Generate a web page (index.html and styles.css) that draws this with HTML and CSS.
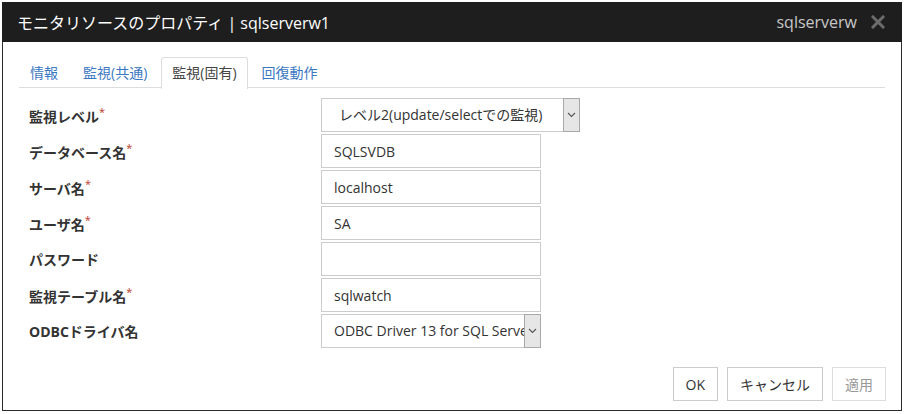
FILE: index.html
```html
<!DOCTYPE html>
<html lang="ja">
<head>
    <meta charset="UTF-8">
    <title>モニタリソースのプロパティ</title>
    <link rel="stylesheet" href="styles.css">
</head>
<body>
    <div class="dialog">
        <div class="titlebar">
            <span class="title">モニタリソースのプロパティ | sqlserverw1</span>
            <span class="title-right">sqlserverw</span>
            <svg class="close" width="14" height="14" viewBox="0 0 14 14">
                <path d="M2 2 L12 12 M12 2 L2 12" stroke="#6b6b6b" stroke-width="3" stroke-linecap="square"/>
            </svg>
        </div>

        <ul class="tabs">
            <li>情報</li>
            <li>監視(共通)</li>
            <li class="active">監視(固有)</li>
            <li>回復動作</li>
        </ul>

        <div class="form">
            <div class="row">
                <label>監視レベル<span class="req">*</span></label>
                <div class="select wide">
                    <span class="value center">レベル2(update/selectでの監視)</span>
                    <span class="arrow"><svg width="9" height="6" viewBox="0 0 9 6"><path d="M1 1 L4.5 4.5 L8 1" fill="none" stroke="#555" stroke-width="1.1"/></svg></span>
                </div>
            </div>
            <div class="row">
                <label>データベース名<span class="req">*</span></label>
                <input class="field" type="text" value="SQLSVDB">
            </div>
            <div class="row">
                <label>サーバ名<span class="req">*</span></label>
                <input class="field" type="text" value="localhost">
            </div>
            <div class="row">
                <label>ユーザ名<span class="req">*</span></label>
                <input class="field" type="text" value="SA">
            </div>
            <div class="row">
                <label>パスワード</label>
                <input class="field" type="password" value="">
            </div>
            <div class="row">
                <label>監視テーブル名<span class="req">*</span></label>
                <input class="field" type="text" value="sqlwatch">
            </div>
            <div class="row">
                <label>ODBCドライバ名</label>
                <div class="select">
                    <span class="value">ODBC Driver 13 for SQL Server</span>
                    <span class="arrow"><svg width="9" height="6" viewBox="0 0 9 6"><path d="M1 1 L4.5 4.5 L8 1" fill="none" stroke="#555" stroke-width="1.1"/></svg></span>
                </div>
            </div>
        </div>

        <div class="buttons">
            <button>OK</button>
            <button>キャンセル</button>
            <button class="disabled">適用</button>
        </div>
    </div>
</body>
</html>
```

FILE: styles.css
```css
body {
    margin: 0;
    padding: 2px;
    background: #fff;
    font-family: "Open Sans", "Noto Sans CJK JP", sans-serif;
    font-size: 14px;
    color: #333;
}
.dialog {
    width: 898px;
    height: 408px;
    border: 1px solid #2a2a2a;
    border-top: none;
    display: flex;
    flex-direction: column;
}
.titlebar {
    height: 40px;
    background: #1e1e1e;
    display: flex;
    align-items: center;
    padding: 0 17px 0 15px;
    margin: 0 -1px;
}
.title {
    color: #fff;
    font-size: 16px;
    flex: 1;
}
.title-right {
    color: #c8c8c8;
    font-size: 16px;
    margin-right: 14px;
}
.tabs {
    list-style: none;
    margin: 15px 16px 0 16px;
    padding: 0;
    display: flex;
    border-bottom: 1px solid #ddd;
    height: 30px;
}
.tabs li {
    padding: 0 10px;
    margin-right: 3px;
    line-height: 30px;
    color: #3a78c3;
    border: 1px solid transparent;
    border-bottom: none;
}
.tabs li.active {
    color: #444;
    background: #fff;
    border-color: #ddd;
    border-radius: 3px 3px 0 0;
    height: 31px;
}
.form {
    padding: 10px 0 0 26px;
}
.row {
    display: flex;
    align-items: center;
    height: 34px;
    margin-bottom: 2px;
}
.row label {
    width: 292px;
    font-weight: bold;
    color: #333;
}
.req {
    color: #c0392b;
    font-size: 11px;
    vertical-align: 6px;
    font-weight: normal;
}
.field {
    box-sizing: border-box;
    width: 220px;
    height: 34px;
    border: 1px solid #ccc;
    padding: 0 12px;
    font-family: inherit;
    font-size: 14px;
    color: #333;
}
.select {
    box-sizing: border-box;
    width: 220px;
    height: 34px;
    border: 1px solid #ccc;
    display: flex;
    align-items: stretch;
}
.select.wide {
    width: 259px;
}
.select .value {
    flex: 1;
    padding-left: 12px;
    white-space: nowrap;
    overflow: hidden;
    line-height: 32px;
}
.select .value.center {
    padding-left: 17px;
}
.select .arrow {
    width: 15px;
    background: #e6e6e6;
    border: 1px solid #a8a8a8;
    margin: -1px -1px -1px 0;
    display: flex;
    align-items: center;
    justify-content: center;
}
.buttons {
    margin-top: auto;
    display: flex;
    justify-content: flex-end;
    gap: 9px;
    padding: 0 15px 9px 0;
}
button {
    height: 34px;
    border: 1px solid #ccc;
    background: #fff;
    padding: 0 12px;
    font-family: inherit;
    font-size: 14px;
    color: #333;
}
button.disabled {
    color: #999;
    border-color: #ddd;
}
```
